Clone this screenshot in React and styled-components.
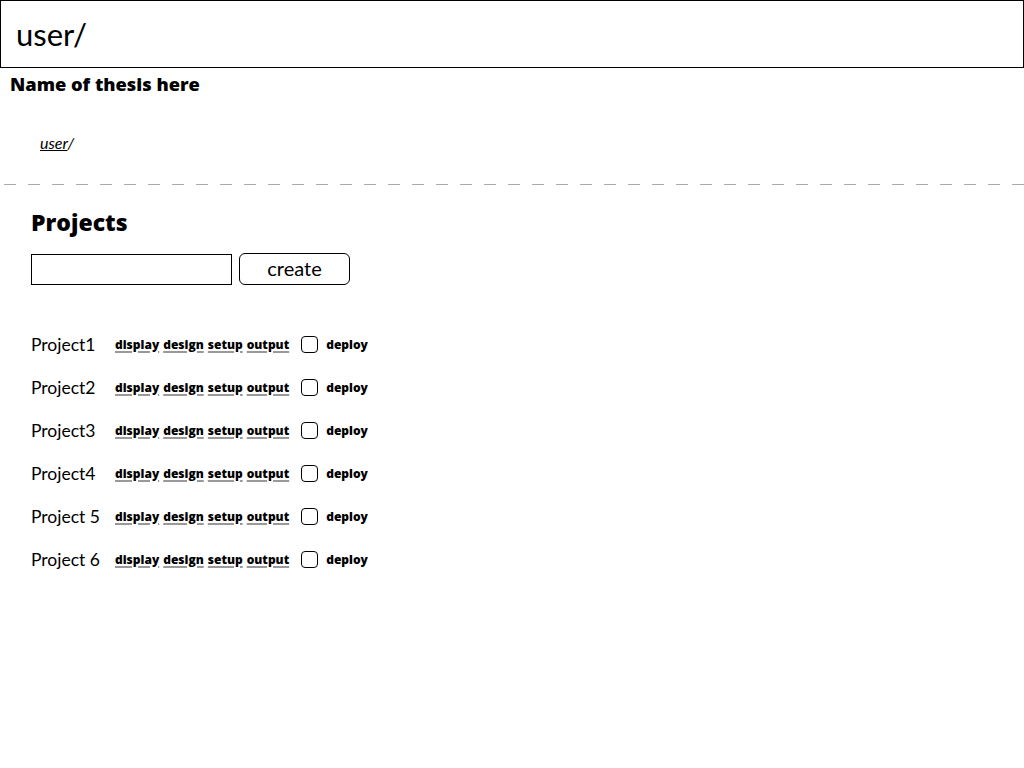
import React from 'react';
import styled, { createGlobalStyle } from 'styled-components';

const GlobalStyle = createGlobalStyle`
  body {
    margin: 0;
    background: #fff;
    font-family: Lato, "Liberation Sans", sans-serif;
    color: #000;
  }
`;

const projects = ['Project1', 'Project2', 'Project3', 'Project4', 'Project 5', 'Project 6'];
const actions = ['display', 'design', 'setup', 'output'];

const App = () => {
  return (
    <Page>
      <GlobalStyle />
      <Header>user/</Header>
      <Thesis>Name of thesis here</Thesis>
      <Breadcrumb>
        <a href="#">user</a>/
      </Breadcrumb>
      <Divider />
      <Section>
        <Title>Projects</Title>
        <CreateRow>
          <NameInput type="text" />
          <CreateButton>create</CreateButton>
        </CreateRow>
        <ProjectList>
          {projects.map((p) => (
            <ProjectRow key={p}>
              <ProjectName>{p}</ProjectName>
              <Actions>
                {actions.map((a) => (
                  <ActionLink key={a} href="#">{a}</ActionLink>
                ))}
              </Actions>
              <Deploy>
                <Check type="checkbox" />
                <span>deploy</span>
              </Deploy>
            </ProjectRow>
          ))}
        </ProjectList>
      </Section>
    </Page>
  );
};

export default App;

const Page = styled.div`
  width: 1024px;
  min-height: 768px;
`;

const Header = styled.div`
  height: 66px;
  border: 1px solid #000;
  display: flex;
  align-items: center;
  padding-left: 15px;
  font-size: 31px;
  font-weight: 400;
`;

const Thesis = styled.h1`
  margin: 0;
  padding: 4px 0 0 10px;
  font-family: "Open Sans", sans-serif;
  font-size: 18.3px;
  font-weight: 800;
  line-height: 24px;
`;

const Breadcrumb = styled.div`
  padding: 37px 0 0 40px;
  font-size: 16px;
  font-style: italic;
  line-height: 20px;

  > a {
    color: #000;
    text-decoration: underline;
  }
`;

const Divider = styled.div`
  margin: 31px 0 0 4px;
  height: 1px;
  background-image: linear-gradient(to right, #aaa 0 12px, transparent 12px 24px);
  background-size: 24px 1px;
`;

const Section = styled.div`
  padding: 22px 0 0 31px;
`;

const Title = styled.h2`
  margin: 0;
  font-family: "Open Sans", sans-serif;
  font-size: 23px;
  font-weight: 800;
  line-height: 30px;
`;

const CreateRow = styled.div`
  display: flex;
  align-items: center;
  gap: 7px;
  margin-top: 16px;
`;

const NameInput = styled.input`
  box-sizing: border-box;
  width: 201px;
  height: 31px;
  border: 1px solid #000;
  border-radius: 0;
  margin: 0;
  padding: 0 4px;
  outline: none;
`;

const CreateButton = styled.button`
  box-sizing: border-box;
  width: 111px;
  height: 32px;
  border: 1px solid #000;
  border-radius: 6px;
  background: #fff;
  font-family: inherit;
  font-size: 20px;
  padding: 0 0 3px;
  color: #000;
`;

const ProjectList = styled.div`
  display: flex;
  flex-direction: column;
  margin-top: 47px;
  gap: 19px;
`;

const ProjectRow = styled.div`
  display: flex;
  align-items: center;
  height: 24px;
`;

const ProjectName = styled.div`
  width: 84px;
  font-size: 17.5px;
  font-weight: 400;
`;

const Actions = styled.div`
  display: flex;
  gap: 4px;
`;

const ActionLink = styled.a`
  font-family: "Open Sans", sans-serif;
  font-size: 12px;
  font-weight: 800;
  color: #000;
  text-decoration: underline;
  text-decoration-color: #999;
  text-decoration-thickness: 2px;
  text-underline-offset: 2px;
`;

const Deploy = styled.label`
  display: flex;
  align-items: center;
  gap: 8px;
  margin-left: 12px;
  font-family: "Open Sans", sans-serif;
  font-size: 12px;
  font-weight: 800;
`;

const Check = styled.input`
  appearance: none;
  margin: 0;
  width: 17px;
  height: 17px;
  border: 1px solid #000;
  border-radius: 4px;
  background: #fff;
`;
